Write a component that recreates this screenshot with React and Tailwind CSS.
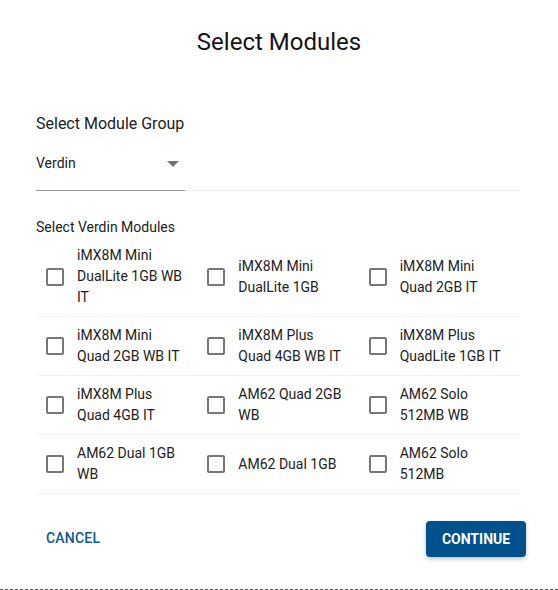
import React from "react";

const rows = [
  ["iMX8M Mini DualLite 1GB WB IT", "iMX8M Mini DualLite 1GB", "iMX8M Mini Quad 2GB IT"],
  ["iMX8M Mini Quad 2GB WB IT", "iMX8M Plus Quad 4GB WB IT", "iMX8M Plus QuadLite 1GB IT"],
  ["iMX8M Plus Quad 4GB IT", "AM62 Quad 2GB WB", "AM62 Solo 512MB WB"],
  ["AM62 Dual 1GB WB", "AM62 Dual 1GB", "AM62 Solo 512MB"],
];

function Item({ label }) {
  return (
    <div className="flex items-center pl-[10px]">
      <span className="w-[18px] h-[18px] shrink-0 border-2 border-[#767676] rounded-[2px] box-border" />
      <span className="ml-[13px] max-w-[110px] text-[14px] leading-[21px] text-[#222222]">{label}</span>
    </div>
  );
}

export default function App() {
  return (
    <div
      className="w-[558px] h-[590px] bg-white box-border border-b border-dashed border-[#555555] flex flex-col"
      style={{ fontFamily: "Roboto, 'Noto Sans', sans-serif" }}
    >
      <h1 className="pt-[26px] text-center text-[24px] leading-[32px] font-normal text-[#141414]">
        Select Modules
      </h1>
      <div className="pl-[36px] pr-[38px] mt-[54px]">
        <div className="text-[16px] leading-[24px] text-[#212121]">Select Module Group</div>
        <div className="flex mt-[17px]">
          <div className="w-[149px] border-b border-[#9a9a9a] pb-[17px] flex items-center justify-between pr-[6px]">
            <span className="text-[14px] leading-[20px] text-[#212121]">Verdin</span>
            <svg width="12" height="6" viewBox="0 0 10 5" className="mt-[1px]">
              <path d="M0 0l5 5 5-5z" fill="#757575" />
            </svg>
          </div>
          <div className="flex-1 border-b border-[#eceff1]" />
        </div>
        <div className="mt-[26px] text-[14px] leading-[20px] text-[#212121]">Select Verdin Modules</div>
        <div className="flex flex-col">
          {rows.map((r, i) => (
            <div key={i} className="grid grid-cols-3 py-[8px] border-b border-[#f4f4f4]">
              {r.map((l) => (
                <Item key={l} label={l} />
              ))}
            </div>
          ))}
        </div>
      </div>
      <div className="flex items-center justify-between pl-[46px] pr-[32px] mt-[27px]">
        <button className="text-[14px] font-medium tracking-[0.2px] text-[#0b5894] uppercase -mt-[2px]">Cancel</button>
        <button className="w-[100px] h-[36px] rounded-[4px] bg-[#00508c] text-white text-[14px] font-bold uppercase shadow-[0_2px_4px_rgba(0,0,0,0.25)]">
          Continue
        </button>
      </div>
    </div>
  );
}
